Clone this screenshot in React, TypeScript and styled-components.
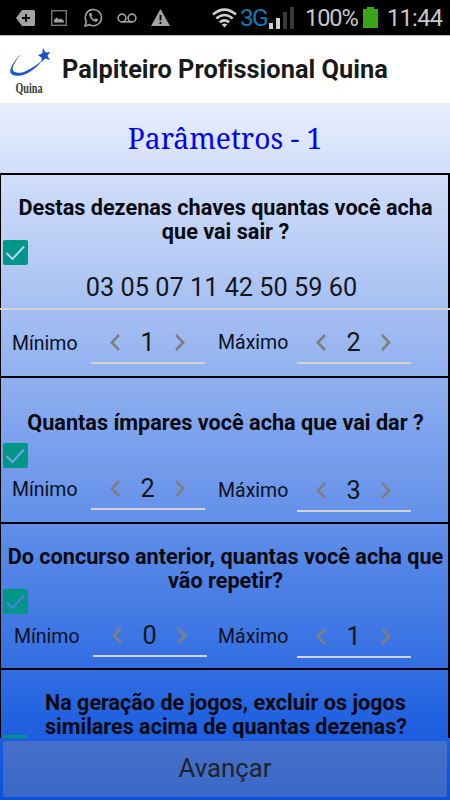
import React from 'react';
import styled, { createGlobalStyle } from 'styled-components';

const questions = [
  {
    id: 1,
    lines: ['Destas dezenas chaves quantas você acha', 'que vai sair ?'],
    numbers: '03 05 07 11 42 50 59 60',
    height: 203,
    textTop: 21,
    tick: '#bccdf5',
    min: { value: 1, top: 17, left: 12 },
    max: { value: 2, top: 17, left: 14 },
  },
  {
    id: 2,
    lines: ['Quantas ímpares você acha que vai dar ?'],
    height: 146,
    textTop: 33,
    tick: '#79a0ec',
    min: { value: 2, top: 5, left: 12 },
    max: { value: 3, top: 7, left: 14 },
  },
  {
    id: 3,
    lines: ['Do concurso anterior, quantas você acha que', 'vão repetir?'],
    height: 146,
    textTop: 21,
    tick: '#4a7fe4',
    min: { value: 0, top: 6, left: 14 },
    max: { value: 1, top: 7, left: 12 },
  },
  {
    id: 4,
    lines: ['Na geração de jogos, excluir os jogos', 'similares acima de quantas dezenas?'],
    height: 146,
    textTop: 21,
    tick: '#1f5fde',
    alignLeft: true,
  },
];

const StatusIcons = () => (
  <>
    <StatusIcon $left={16} width="19" height="16" viewBox="0 0 19 16">
      <path d="M6 0H17.5Q19 0 19 1.5V14.5Q19 16 17.5 16H6L0 8Z" fill="#a2a2a2" />
      <path d="M10 4V12M6 8H14" stroke="#000" strokeWidth="1.8" />
    </StatusIcon>
    <StatusIcon $left={16} width="16" height="16" viewBox="0 0 16 16">
      <rect x=".7" y=".7" width="14.6" height="14.6" fill="none" stroke="#777" strokeWidth="1.4" />
      <path d="M3 12V10L5.5 7.5L8 9.5L10 8.5L13 11V12.5H3Z" fill="#a2a2a2" />
    </StatusIcon>
    <StatusIcon $left={17} width="19" height="19" viewBox="0 0 19 19">
      <path d="M1 18L2.3 13.5A8.1 8.1 0 1 1 5.5 16.7Z" fill="none" stroke="#a2a2a2" strokeWidth="1.6" />
      <path
        d="M6.4 4.8C5.3 5.3 4.9 6.7 5.5 8.3C6.6 11 8.8 13.1 11.4 13.7C12.9 14 14.2 13 14.1 11.5L11.8 10.3L10.6 11.6C9 11 7.9 9.8 7.3 8.5L8.2 7.3L7.3 4.9Z"
        fill="#a2a2a2"
      />
    </StatusIcon>
    <StatusIcon $left={14} width="20" height="10" viewBox="0 0 20 10">
      <g fill="none" stroke="#a2a2a2" strokeWidth="1.6">
        <circle cx="5" cy="5" r="3.9" />
        <circle cx="15" cy="5" r="3.9" />
        <path d="M5 8.9H15" />
      </g>
    </StatusIcon>
    <StatusIcon $left={14} width="19" height="17" viewBox="0 0 19 17">
      <path d="M9.5 0L19 17H0Z" fill="#a2a2a2" />
      <path d="M9.5 6V11.5M9.5 13V15" stroke="#000" strokeWidth="1.8" />
    </StatusIcon>
  </>
);

const Wifi = () => (
  <StatusIcon $left={42} width="25" height="20" viewBox="0 0 25 20">
    <g fill="none" stroke="#d0d0d0" strokeWidth="2.6">
      <path d="M1 6.5Q12.5 -3.3 24 6.5" />
      <path d="M4.3 10.5Q12.5 3.5 20.7 10.5" />
      <path d="M7.8 14.3Q12.5 10.3 17.2 14.3" />
    </g>
    <path d="M9.8 16.6Q12.5 14.6 15.2 16.6L12.5 19.6Z" fill="#d0d0d0" />
  </StatusIcon>
);

const Signal = () => (
  <StatusIcon $left={1} width="25" height="22" viewBox="0 0 25 22">
    <path d="M0 16H4V22H0ZM7 11H11V22H7Z" fill="#d0d0d0" />
    <path d="M14 5H18V22H14ZM21 0H25V22H21Z" fill="#3a3a3a" />
  </StatusIcon>
);

const Logo = () => (
  <LogoSvg width="45" height="52" viewBox="0 0 45 52">
    <path
      d="M12.5 6C7 10 0 20 1.4 24.5C2.4 28 10 29.3 18 25.5C25 22 30 17 34.5 11C29 16 23 20.5 16.5 23.2C10.5 25.7 4.5 25 3.8 22C3 18 7.5 11 12.5 6Z"
      fill="#1b58cf"
    />
    <path d="M34 0L36.6 4.4L41.2 4L38.4 7.8L41 12L36.1 10.6L32.8 14L32.4 9.4L29 7.2L33.3 5.2Z" fill="#1b4fc6" />
    <text
      x="6.5"
      y="45.3"
      textLength="27"
      lengthAdjust="spacingAndGlyphs"
      fontFamily="Liberation Serif, serif"
      fontWeight="700"
      fontSize="14"
      fill="#3a3a3a"
    >
      Quina
    </text>
  </LogoSvg>
);

const Stepper = ({ value, top }: { value: number; top: number }) => (
  <Field $top={top}>
    <Arrow viewBox="0 0 10 17">
      <path d="M9 1L1.8 8.5L9 16" />
    </Arrow>
    <Value>{value}</Value>
    <Arrow viewBox="0 0 10 17">
      <path d="M1 1L8.2 8.5L1 16" />
    </Arrow>
  </Field>
);

const App = () => {
  return (
    <>
      <GlobalStyle />
      <Screen>
        <StatusBar>
          <StatusIcons />
          <Wifi />
          <Network>3G</Network>
          <Signal />
          <Percent>100%</Percent>
          <StatusIcon $left={6} width="15" height="21" viewBox="0 0 15 21">
            <path d="M4 0H11V2H15V21H0V2H4Z" fill="#3aa51c" />
          </StatusIcon>
          <Clock>11:44</Clock>
        </StatusBar>
        <Header>
          <Logo />
          <AppName>Palpiteiro Profissional Quina</AppName>
        </Header>
        <Body>
          <Title>Parâmetros - 1</Title>
          <List>
            {questions.map(({ id, lines, numbers, height, textTop, tick, alignLeft, min, max }) => (
              <Card key={id} $height={height}>
                <Question $top={textTop} $alignLeft={alignLeft}>
                  {lines.map((line) => (
                    <span key={line}>{line}</span>
                  ))}
                </Question>
                <Checkbox viewBox="0 0 25 25" $tick={tick}>
                  <rect width="25" height="25" rx="2" fill="#009688" />
                  <path d="M3.5 13L9.5 19L21 6.5" />
                </Checkbox>
                {numbers && <Numbers>{numbers}</Numbers>}
                {min && max && (
                  <Params>
                    <Label $left={min.left} $top={min.top}>
                      Mínimo
                    </Label>
                    <Stepper value={min.value} top={min.top} />
                    <Label $left={max.left} $top={max.top - 1}>
                      Máximo
                    </Label>
                    <Stepper value={max.value} top={max.top} />
                  </Params>
                )}
              </Card>
            ))}
          </List>
          <NextButton>Avançar</NextButton>
        </Body>
      </Screen>
    </>
  );
};

export default App;

const GlobalStyle = createGlobalStyle`
  * {
    box-sizing: border-box;
  }

  body {
    margin: 0;
    font-family: Roboto, sans-serif;
    font-variant-ligatures: none;
  }
`;

const Screen = styled.div`
  display: flex;
  flex-direction: column;
  width: 450px;
  height: 800px;
  overflow: hidden;
`;

const StatusBar = styled.div`
  display: flex;
  align-items: center;
  height: 36px;
  flex-shrink: 0;
  background: #000;
  border-bottom: 1px solid #b9b7b2;
  white-space: nowrap;
`;

const StatusIcon = styled.svg<{ $left: number }>`
  flex-shrink: 0;
  margin-left: ${({ $left }) => $left}px;
`;

const Network = styled.span`
  width: 28px;
  margin-left: 3px;
  color: #0b7bb5;
  font-size: 24.5px;
  letter-spacing: -1.8px;
`;

const Percent = styled.span`
  width: 52px;
  margin-left: 11px;
  padding-top: 1px;
  color: #c8c8c8;
  font-size: 23.6px;
  letter-spacing: -1.1px;
`;

const Clock = styled.span`
  margin-left: 9px;
  padding-top: 1px;
  color: #c8c8c8;
  font-size: 23.6px;
  letter-spacing: -0.7px;
`;

const Header = styled.header`
  display: flex;
  align-items: center;
  height: 67px;
  flex-shrink: 0;
  padding-left: 9px;
  background: #fff;
`;

const LogoSvg = styled.svg`
  flex-shrink: 0;
  margin-top: 9px;
`;

const AppName = styled.h1`
  margin: 0 0 2px 8px;
  color: #181b1b;
  font-size: 25.4px;
  font-weight: 700;
  white-space: nowrap;
`;

const Body = styled.main`
  display: flex;
  flex-direction: column;
  flex: 1;
  min-height: 0;
  background: linear-gradient(#e8eefc, #0850dc);
`;

const Title = styled.h2`
  height: 70px;
  flex-shrink: 0;
  margin: 0;
  color: #0000f5;
  font-family: 'Noto Serif', 'DejaVu Serif Condensed', 'DejaVu Serif', serif;
  font-size: 28.2px;
  font-weight: 400;
  line-height: 71px;
  text-align: center;
`;

const List = styled.div`
  flex: 1;
  min-height: 0;
  overflow: hidden;
`;

const Card = styled.section<{ $height: number }>`
  display: flex;
  flex-direction: column;
  height: ${({ $height }) => $height}px;
  border: solid #000;
  border-width: 2px 2px 0 1px;
`;

const Question = styled.h3<{ $top: number; $alignLeft?: boolean }>`
  display: flex;
  flex-direction: column;
  align-items: ${({ $alignLeft }) => ($alignLeft ? 'flex-start' : 'center')};
  height: 65px;
  flex-shrink: 0;
  margin: 0;
  padding-top: ${({ $top }) => $top}px;
  padding-left: ${({ $alignLeft }) => ($alignLeft ? 44 : 2)}px;
  color: #060a10;
  font-size: ${({ $alignLeft }) => ($alignLeft ? 21.55 : 21.65)}px;
  font-weight: 700;
  line-height: 24px;
  white-space: nowrap;
`;

const Checkbox = styled.svg<{ $tick: string }>`
  width: 25px;
  height: 25px;
  flex-shrink: 0;
  margin-left: 2px;

  path {
    fill: none;
    stroke: ${({ $tick }) => $tick};
    stroke-width: 2;
  }
`;

const Numbers = styled.div`
  height: 45px;
  flex-shrink: 0;
  margin-right: -2px;
  margin-left: -1px;
  padding-right: 7px;
  border-bottom: 2px solid #d3d3d3;
  color: #14161c;
  font-size: 25.3px;
  line-height: 46px;
  text-align: center;
`;

const Params = styled.div`
  display: flex;
  align-items: flex-start;
  margin-left: -1px;
`;

const Label = styled.span<{ $left: number; $top: number }>`
  width: 79px;
  flex-shrink: 0;
  margin-top: ${({ $top }) => $top}px;
  margin-left: ${({ $left }) => $left}px;
  color: #0b1020;
  font-size: 19.5px;
  line-height: 33px;
`;

const Field = styled.div<{ $top: number }>`
  display: flex;
  align-items: center;
  justify-content: space-between;
  width: 114px;
  height: 37px;
  flex-shrink: 0;
  margin-top: ${({ $top }) => $top}px;
  margin-right: -1px;
  padding: 0 20px 4px 19px;
  border-bottom: 2px solid #d3d3d3;
`;

const Arrow = styled.svg`
  width: 10px;
  height: 17px;

  path {
    fill: none;
    stroke: #7f7f83;
    stroke-width: 2.6;
  }
`;

const Value = styled.span`
  color: #14161c;
  font-size: 25.3px;
  line-height: 30px;
`;

const NextButton = styled.button`
  height: 56px;
  flex-shrink: 0;
  margin: 3px;
  padding: 0 0 2px;
  border: 0;
  border-radius: 2px;
  background: rgba(128, 138, 172, 0.42);
  color: #20242a;
  font-family: inherit;
  font-size: 25.8px;
`;
